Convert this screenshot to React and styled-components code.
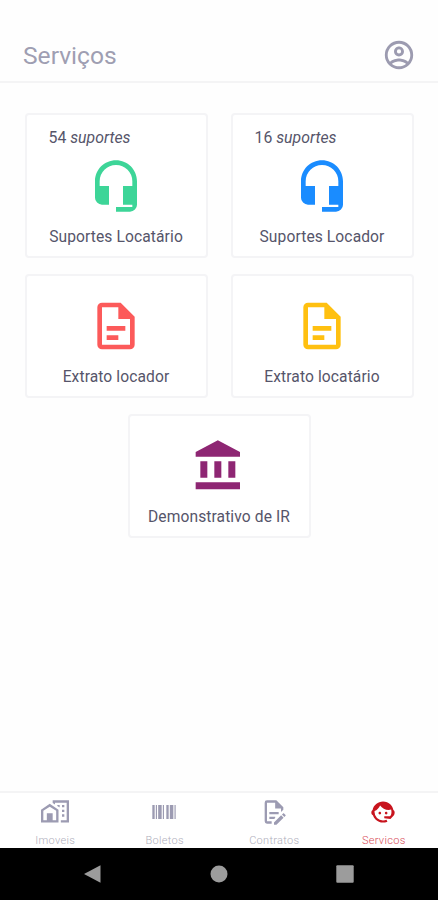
import React from 'react';
import styled, { createGlobalStyle } from 'styled-components';

const GlobalStyle = createGlobalStyle`
  * {
    box-sizing: border-box;
  }

  body {
    margin: 0;
    background-color: #fefefe;
    font-family: Roboto, 'Liberation Sans', sans-serif;
  }
`;

const Screen = styled.div`
  display: flex;
  flex-direction: column;
  width: 438px;
  height: 900px;
  background-color: #fefefe;
  overflow: hidden;
`;

const Header = styled.header`
  display: flex;
  align-items: center;
  justify-content: space-between;
  height: 83px;
  padding: 28px 22px 0 23px;
  border-bottom: 2px solid #f4f4f5;
`;

const Title = styled.h1`
  margin: 3px 0 0;
  font-size: 24.6px;
  line-height: 30px;
  font-weight: 400;
  color: #9f9eb2;
`;

const Icon = styled.svg`
  display: block;
  flex-shrink: 0;
  width: ${(props) => props.$size}px;
  height: ${(props) => props.$size}px;
  fill: ${(props) => props.$color};
`;

const ServiceList = styled.main`
  flex: 1;
  display: flex;
  flex-wrap: wrap;
  align-content: flex-start;
  justify-content: center;
  gap: 16px 23px;
  padding-top: 30px;
`;

const ServiceCard = styled.div`
  display: flex;
  flex-direction: column;
  align-items: center;
  width: 183px;
  height: ${(props) => (props.$tall ? 145 : 124)}px;
  padding-top: ${(props) => (props.$tall ? 13 : 22)}px;
  border: 2px solid #f4f4f6;
  border-radius: 4px;
  background-color: #fff;
`;

const SupportCount = styled.p`
  align-self: flex-start;
  margin: 0 0 10px 22px;
  font-size: 15.8px;
  line-height: 20px;
  color: #56556a;
`;

const ServiceName = styled.p`
  margin: 13px 0 0;
  font-size: 15.6px;
  line-height: 20px;
  letter-spacing: 0.1px;
  white-space: nowrap;
  color: #56556a;
`;

const TabBar = styled.nav`
  display: flex;
  height: 57px;
  border-top: 2px solid #f4f4f5;
  background-color: #fff;
`;

const Tab = styled.div`
  flex: 1;
  display: flex;
  flex-direction: column;
  align-items: center;
  padding-top: 5px;
  color: ${(props) => (props.$active ? '#d84a56' : '#b0afbc')};
`;

const TabLabel = styled.span`
  margin: 8px 0 0 1px;
  font-size: 11px;
  line-height: 14px;
  font-weight: 300;
  letter-spacing: 0.3px;
`;

const SystemBar = styled.footer`
  display: flex;
  align-items: center;
  justify-content: center;
  gap: 108px;
  height: 52px;
  background-color: #000;
`;

const icons = {
  account:
    'M12,2A10,10 0 0,0 2,12A10,10 0 0,0 12,22A10,10 0 0,0 22,12A10,10 0 0,0 12,2M7.07,18.28C7.5,17.38 10.12,16.5 12,16.5C13.88,16.5 16.5,17.38 16.93,18.28C15.57,19.36 13.86,20 12,20C10.14,20 8.43,19.36 7.07,18.28M18.36,16.83C16.93,15.09 13.46,14.5 12,14.5C10.54,14.5 7.07,15.09 5.64,16.83C4.62,15.5 4,13.82 4,12C4,7.59 7.59,4 12,4C16.41,4 20,7.59 20,12C20,13.82 19.38,15.5 18.36,16.83M12,6C10.06,6 8.5,7.56 8.5,9.5C8.5,11.44 10.06,13 12,13C13.94,13 15.5,11.44 15.5,9.5C15.5,7.56 13.94,6 12,6M12,11A1.5,1.5 0 0,1 10.5,9.5A1.5,1.5 0 0,1 12,8A1.5,1.5 0 0,1 13.5,9.5A1.5,1.5 0 0,1 12,11Z',
  headset:
    'M12,1C7,1 3,5 3,10V17A3,3 0 0,0 6,20H9V12H5V10A7,7 0 0,1 12,3A7,7 0 0,1 19,10V12H15V20H19V21H12V23H18A3,3 0 0,0 21,20V10C21,5 16.97,1 12,1Z',
  document:
    'M6,2A2,2 0 0,0 4,4V20A2,2 0 0,0 6,22H18A2,2 0 0,0 20,20V8L14,2H6M6,4H13V9H18V20H6V4M8,12V14H16V12H8M8,16V18H13V16H8Z',
  bank: 'M11.5,1L2,6V8H21V6M16,10V17H19V10M2,22H21V19H2M10,10V17H13V10M4,10V17H7V10H4Z',
  home: 'M10,2V4.26L12,5.59V4H22V19H17V21H24V2H10M7.5,5L0,10V21H15V10L7.5,5M14,6V6.93L15.61,8H16V6H14M18,6V8H20V6H18M7.5,7.5L13,11V19H10V13H5V19H2V11L7.5,7.5M18,10V12H20V10H18M18,14V16H20V14H18Z',
  barcode:
    'M2,6H4V18H2V6M5,6H6V18H5V6M7,6H10V18H7V6M11,6H12V18H11V6M14,6H16V18H14V6M17,6H20V18H17V6M21,6H22V18H21V6Z',
  contract:
    'M8,12H16V14H8V12M10,20H6V4H13V9H18V12.1L20,10.1V8L14,2H6A2,2 0 0,0 4,4V20A2,2 0 0,0 6,22H10V20M8,18H12.1L13,17.1V16H8V18M20.2,13C20.3,13 20.5,13.1 20.6,13.2L21.9,14.5C22.1,14.7 22.1,15.1 21.9,15.3L20.9,16.3L18.8,14.2L19.8,13.2C19.9,13.1 20,13 20.2,13M20.2,16.9L14.1,23H12V20.9L18.1,14.8L20.2,16.9Z',
  agent:
    'M18.72,14.76C19.07,13.91 19.26,13 19.26,12C19.26,11.28 19.15,10.59 18.96,9.95C18.31,10.1 17.63,10.18 16.92,10.18C13.86,10.18 11.15,8.67 9.5,6.34C8.61,8.5 6.91,10.26 4.77,11.22C4.73,11.47 4.73,11.74 4.73,12A7.27,7.27 0 0,0 12,19.27C13.05,19.27 14.06,19.04 14.97,18.63C15.54,19.72 15.8,20.26 15.78,20.26C14.14,20.81 12.87,21.08 12,21.08C9.58,21.08 7.27,20.13 5.57,18.42C4.53,17.38 3.76,16.11 3.33,14.73C2.5,14.4 2,13.5 2,12.45C2,11.4 2.4,10.5 3.09,10.18C3.93,6.04 7.6,2.92 12,2.92C14.4,2.92 16.71,3.87 18.42,5.58C19.69,6.84 20.54,8.45 20.89,10.18C21.6,10.5 22,11.4 22,12.45C22,13.5 21.7,14.4 21.2,15.1L18.38,18L13.08,17.4V15.73H17.91L18.72,14.76M9.27,11.77C9.57,11.77 9.86,11.89 10.07,12.11C10.28,12.32 10.4,12.61 10.4,12.91C10.4,13.21 10.28,13.5 10.07,13.71C9.86,13.92 9.57,14.04 9.27,14.04C8.64,14.04 8.13,13.54 8.13,12.91C8.13,12.28 8.64,11.77 9.27,11.77M14.72,11.77C15.35,11.77 15.85,12.28 15.85,12.91C15.85,13.54 15.35,14.04 14.72,14.04C14.09,14.04 13.58,13.54 13.58,12.91A1.14,1.14 0 0,1 14.72,11.77Z',
};

const services = [
  { name: 'Suportes Locatário', icon: 'headset', color: '#3dd598', count: 54 },
  { name: 'Suportes Locador', icon: 'headset', color: '#1a8cff', count: 16 },
  { name: 'Extrato locador', icon: 'document', color: '#fc5a5a' },
  { name: 'Extrato locatário', icon: 'document', color: '#ffc010' },
  { name: 'Demonstrativo de IR', icon: 'bank', color: '#8e2673' },
];

const tabs = [
  { label: 'Imoveis', icon: 'home' },
  { label: 'Boletos', icon: 'barcode' },
  { label: 'Contratos', icon: 'contract' },
  { label: 'Servicos', icon: 'agent', active: true },
];

const MdiIcon = ({ name, size, color }) => (
  <Icon viewBox="0 0 24 24" $size={size} $color={color}>
    <path d={icons[name]} />
  </Icon>
);

const App = () => (
  <>
    <GlobalStyle />
    <Screen>
      <Header>
        <Title>Serviços</Title>
        <MdiIcon name="account" size={34} color="#9c9bb0" />
      </Header>
      <ServiceList>
        {services.map((service) => (
          <ServiceCard key={service.name} $tall={!!service.count}>
            {service.count && (
              <SupportCount>
                {service.count} <em>suportes</em>
              </SupportCount>
            )}
            <MdiIcon name={service.icon} size={56} color={service.color} />
            <ServiceName>{service.name}</ServiceName>
          </ServiceCard>
        ))}
      </ServiceList>
      <TabBar>
        {tabs.map((tab) => (
          <Tab key={tab.label} $active={tab.active}>
            <MdiIcon name={tab.icon} size={28} color={tab.active ? '#c8141e' : '#9c9bb2'} />
            <TabLabel>{tab.label}</TabLabel>
          </Tab>
        ))}
      </TabBar>
      <SystemBar>
        <Icon viewBox="0 0 18 18" $size={18} $color="#9c9c9c">
          <path d="M0 9L16.5 0.2V17.8Z" />
        </Icon>
        <Icon viewBox="0 0 18 18" $size={18} $color="#9c9c9c">
          <circle cx="9" cy="9" r="8.5" />
        </Icon>
        <Icon viewBox="0 0 18 18" $size={18} $color="#9c9c9c">
          <rect x="0.3" y="0.3" width="17.4" height="17.4" rx="1" />
        </Icon>
      </SystemBar>
    </Screen>
  </>
);

export default App;
